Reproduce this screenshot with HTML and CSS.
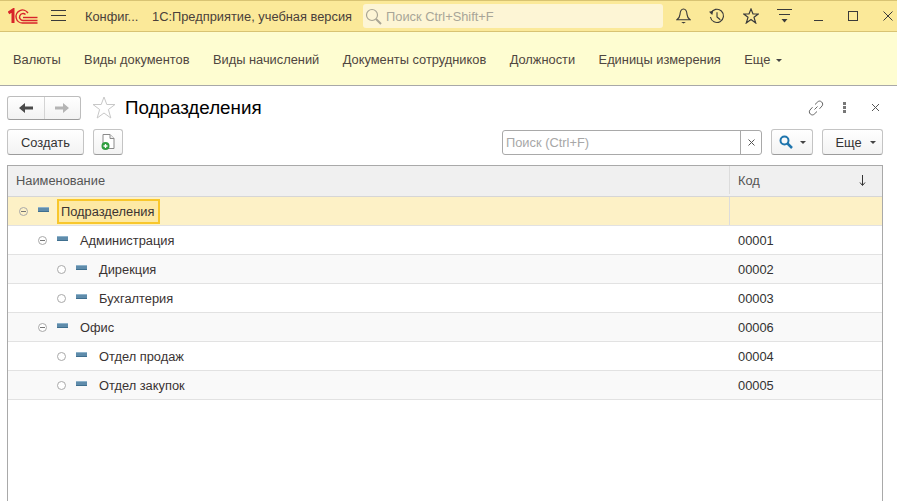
FILE: index.html
```html
<!DOCTYPE html>
<html lang="ru">

<head>
    <meta charset="UTF-8">
    <title>Подразделения</title>
    <link rel="stylesheet" href="styles.css">
</head>

<body>
    <header class="titlebar">
        <svg class="logo" width="30" height="16" viewBox="0 0 30 16" fill="none" stroke="#d8232a">
            <path d="M.5 5L5 2V15" stroke-width="3" />
            <path d="M20 5A6.500 6.500 0 1 0 15 15H29.500" stroke-width="1.400" />
            <path d="M17.500 6.500A3.500 3.500 0 1 0 15 12.500H29.500" stroke-width="1.400" />
            <path d="M15 9.500H29.500" stroke-width="1.400" />
        </svg>
        <svg class="burger" width="15" height="12" viewBox="0 0 15 12" stroke="#3a3a3a">
            <path d="M0 .5H15M0 5.500H15M0 10.500H15" />
        </svg>
        <span class="app-name">Конфиг...</span>
        <span class="app-title">1С:Предприятие, учебная версия</span>
        <div class="global-search">
            <svg width="17" height="17" viewBox="0 0 17 17" fill="none" stroke="#a9a594" stroke-width="1.200">
                <circle cx="7" cy="7" r="5.500" />
                <path d="M11 11L16 16" stroke-width="2" />
            </svg>
            <span>Поиск Ctrl+Shift+F</span>
        </div>
        <div class="tools">
            <svg width="15" height="18" viewBox="0 0 16 18" fill="none" stroke="#3a3a3a" stroke-width="1.200">
                <path d="M8 1.500C5 1.500 4.500 4 4.200 7.500C4 10 3 11.500 1 13H15C13 11.500 12 10 11.800 7.500C11.500 4 11 1.500 8 1.500Z" />
                <path d="M5.500 15.500H10.500L8 17Z" fill="#3a3a3a" stroke="none" />
            </svg>
            <svg width="16" height="17" viewBox="0 0 17 17" fill="none" stroke="#3a3a3a" stroke-width="1.200">
                <path d="M2 5A7 7 0 1 1 1.500 9" />
                <path d="M0 3.500L4.500 2.500L3.500 7Z" fill="#3a3a3a" stroke="none" />
                <path d="M8.500 4V9L12 12" />
            </svg>
            <svg width="16" height="16" viewBox="0 0 16 16" fill="none" stroke="#3a3a3a" stroke-width="1.200">
                <path d="M8 1L10 6H15.300L11 9.300L12.700 15L8 11.600L3.300 15L5 9.300L.7 6H6Z" />
            </svg>
            <svg width="15" height="14" viewBox="0 0 15 14" stroke="#3a3a3a">
                <path d="M0 .5H15M2 5.500H13" />
                <path d="M4.500 10H10.500L7.500 13.500Z" fill="#3a3a3a" stroke="none" />
            </svg>
        </div>
        <div class="window-btns">
            <svg width="9" height="9" viewBox="0 0 9 9" stroke="#3a3a3a"><path d="M0 8.500H9" /></svg>
            <svg width="10" height="10" viewBox="0 0 10 10" fill="none" stroke="#3a3a3a"><rect x=".5" y=".5" width="9" height="9" /></svg>
            <svg width="10" height="10" viewBox="0 0 10 10" stroke="#3a3a3a"><path d="M.5 .5L9.500 9.500M9.500 .5L.5 9.500" /></svg>
        </div>
    </header>

    <nav class="menu">
        <a>Валюты</a>
        <a>Виды документов</a>
        <a>Виды начислений</a>
        <a>Документы сотрудников</a>
        <a>Должности</a>
        <a>Единицы измерения</a>
        <a class="more">Еще <i class="caret"></i></a>
    </nav>

    <main class="page">
        <div class="title-row">
            <div class="nav-btns">
                <button class="nav-btn">
                    <svg width="14" height="10" viewBox="0 0 14 10" fill="#4a4a4a"><path d="M0 5L6 0V3.500H14V6.500H6V10Z" /></svg>
                </button>
                <button class="nav-btn">
                    <svg width="14" height="10" viewBox="0 0 14 10" fill="#b4b4b4"><path d="M14 5L8 0V3.500H0V6.500H8V10Z" /></svg>
                </button>
            </div>
            <svg class="fav" width="24" height="23" viewBox="0 0 24 23" fill="#fff" stroke="#c8c8c8">
                <path d="M12 1L14.800 8.500H23L16.400 13.500L18.800 22L12 17L5.200 22L7.600 13.500L1 8.500H9.200Z" />
            </svg>
            <h1>Подразделения</h1>
            <div class="title-tools">
                <svg width="16" height="16" viewBox="0 0 16 16" fill="none" stroke="#666">
                    <path d="M6.500 9.500L9.500 6.500" />
                    <path d="M7 4.500L9.800 1.800C10.800 .8 12.500 .8 13.700 2C14.900 3.200 15 5 14 6L11.500 8.800" />
                    <path d="M9 11.500L6.200 14.200C5.200 15.200 3.500 15.200 2.300 14C1.100 12.800 1 11 2 10L4.500 7.200" />
                </svg>
                <svg class="tool-dots" width="3" height="11" viewBox="0 0 3 11" fill="#777">
                    <rect width="3" height="3" /><rect y="4" width="3" height="3" /><rect y="8" width="3" height="3" />
                </svg>
                <svg class="tool-close" width="7" height="7" viewBox="0 0 7 7" stroke="#555"><path d="M0 0L7 7M7 0L0 7" /></svg>
            </div>
        </div>

        <div class="command-bar">
            <button class="btn btn-create">Создать</button>
            <button class="btn btn-copy">
                <svg width="15" height="18" viewBox="0 0 15 18">
                    <path d="M2 1.500H9L13 5.500V15.500H2Z" fill="#fff" stroke="#8a8a8a" />
                    <path d="M9 1.500V5.500H13" fill="#eee" stroke="#8a8a8a" />
                    <circle cx="4.500" cy="13" r="4" fill="#2f9e3f" />
                    <path d="M2.500 13H6.500M4.500 11V15" stroke="#fff" stroke-width="1.300" />
                </svg>
            </button>
            <div class="search">
                <span class="search-text">Поиск (Ctrl+F)</span>
                <span class="search-clear">
                    <svg width="7" height="7" viewBox="0 0 7 7" stroke="#555"><path d="M.5 .5L6.500 6.500M6.500 .5L.5 6.500" /></svg>
                </span>
            </div>
            <button class="btn btn-find">
                <svg width="14" height="14" viewBox="0 0 14 14" fill="none" stroke="#1f75ad" stroke-width="2">
                    <circle cx="5.500" cy="5.500" r="4" />
                    <path d="M8.500 8.500L13 13" stroke-width="2.500" />
                </svg>
                <i class="caret"></i>
            </button>
            <button class="btn btn-more">Еще <i class="caret"></i></button>
        </div>

        <div class="grid">
            <div class="row head">
                <div class="cell name">Наименование</div>
                <div class="cell code">Код
                    <svg width="7" height="11" viewBox="0 0 7 11" fill="none" stroke="#333"><path d="M3.500 0V10M1 7.500L3.500 10.500L6 7.500" /></svg>
                </div>
            </div>
            <div class="row selected">
                <div class="cell name level-0"><i class="toggle open"></i><i class="item"></i><span class="current">Подразделения</span></div>
                <div class="cell code"></div>
            </div>
            <div class="row">
                <div class="cell name level-1"><i class="toggle open"></i><i class="item"></i><span>Администрация</span></div>
                <div class="cell code">00001</div>
            </div>
            <div class="row alt">
                <div class="cell name level-2"><i class="toggle"></i><i class="item"></i><span>Дирекция</span></div>
                <div class="cell code">00002</div>
            </div>
            <div class="row">
                <div class="cell name level-2"><i class="toggle"></i><i class="item"></i><span>Бухгалтерия</span></div>
                <div class="cell code">00003</div>
            </div>
            <div class="row alt">
                <div class="cell name level-1"><i class="toggle open"></i><i class="item"></i><span>Офис</span></div>
                <div class="cell code">00006</div>
            </div>
            <div class="row">
                <div class="cell name level-2"><i class="toggle"></i><i class="item"></i><span>Отдел продаж</span></div>
                <div class="cell code">00004</div>
            </div>
            <div class="row alt">
                <div class="cell name level-2"><i class="toggle"></i><i class="item"></i><span>Отдел закупок</span></div>
                <div class="cell code">00005</div>
            </div>
        </div>
    </main>
</body>

</html>
```

FILE: styles.css
```css
/* Reset */

* {
    padding: 0;
    margin: 0;
    box-sizing: border-box;
}

html,
body {
    height: 100%;
    overflow: hidden;
}

body {
    display: flex;
    flex-direction: column;
    font-family: "Liberation Sans", Arial, sans-serif;
    font-size: 12.85px;
    color: #333;
    background-color: #fff;
}

i {
    display: block;
}

svg {
    display: block;
    flex: none;
}

.caret {
    display: inline-block;
    width: 0;
    height: 0;
    border-left: 3px solid transparent;
    border-right: 3px solid transparent;
    border-top: 3px solid #444;
    vertical-align: 2px;
}


/* Title bar */

.titlebar {
    flex: 0 0 32px;
    display: flex;
    align-items: center;
    background-color: #fbe999;
    border-top: 1px solid #d8c373;
    border-bottom: 1px solid #d8c373;
    color: #4a3f3a;
}

.logo {
    margin-left: 8px;
}

.burger {
    margin-left: 13px;
}

.app-name {
    width: 55px;
    margin-left: 19px;
}

.app-title {
    margin-left: 12px;
}

.global-search {
    width: 300px;
    height: 24px;
    margin-left: 11px;
    padding-left: 2px;
    display: flex;
    align-items: center;
    gap: 4px;
    background-color: #fdf5d5;
    border-radius: 3px;
    color: #a8a598;
}

.tools {
    display: flex;
    align-items: center;
    gap: 18px;
    margin-left: 13px;
}

.window-btns {
    display: flex;
    align-items: center;
    gap: 25px;
    margin-left: 22px;
}


/* Menu */

.menu {
    flex: 0 0 54px;
    display: flex;
    align-items: center;
    gap: 23.4px;
    padding: 1px 0 0 13px;
    background-color: #fefdd1;
    border-bottom: 1px solid #a8a8a8;
    color: #4f4640;
}

.menu a {
    white-space: nowrap;
}

.menu .caret {
    margin-left: 2px;
}


/* Form */

.page {
    flex: 1 1 auto;
    min-height: 0;
    display: flex;
    flex-direction: column;
    padding: 9px 14px 0 7px;
}

.title-row {
    flex: 0 0 25px;
    display: flex;
    align-items: center;
}

.nav-btns {
    display: flex;
    width: 74px;
    height: 24px;
    background: linear-gradient(#fff, #f2f2f2);
    border: 1px solid #bdbdbd;
    border-bottom-color: #9a9a9a;
    border-radius: 3px;
}

.nav-btn {
    flex: 1;
    display: flex;
    align-items: center;
    justify-content: center;
    background: none;
    border: 0;
}

.nav-btn + .nav-btn {
    border-left: 1px solid #d4d4d4;
}

.fav {
    margin-left: 11px;
}

h1 {
    margin-left: 9px;
    font-size: 18.8px;
    font-weight: normal;
    color: #000;
}

.title-tools {
    margin-left: auto;
    display: flex;
    align-items: center;
    padding-right: 4px;
}

.tool-dots {
    margin-left: 19px;
}

.tool-close {
    margin-left: 26px;
}

.command-bar {
    flex: 0 0 26px;
    display: flex;
    align-items: center;
    margin-top: 9px;
}

.btn {
    height: 26px;
    display: flex;
    align-items: center;
    justify-content: center;
    font: inherit;
    color: #333;
    background: linear-gradient(#fff, #f3f3f3);
    border: 1px solid #c4c4c4;
    border-bottom-color: #9c9c9c;
    border-radius: 3px;
}

.btn-create {
    width: 77px;
}

.btn-copy {
    width: 30px;
    margin-left: 9px;
}

.search {
    width: 260px;
    height: 25px;
    margin-left: auto;
    display: flex;
    background-color: #fff;
    border: 1px solid #a9a9a9;
    border-radius: 3px;
}

.search-text {
    flex: 1;
    padding-left: 3px;
    line-height: 23px;
    color: #a7a7a7;
}

.search-clear {
    width: 21px;
    display: flex;
    align-items: center;
    justify-content: center;
    border-left: 1px solid #a9a9a9;
}

.btn-find {
    width: 42px;
    margin-left: 9px;
    gap: 7px;
}

.btn-more {
    width: 61px;
    margin-left: 9px;
    padding-left: 6px;
    gap: 8px;
}


/* Tree table */

.grid {
    flex: 1 1 auto;
    margin-top: 10px;
    border: 1px solid #a9a9a9;
    border-bottom: 0;
}

.row {
    display: flex;
    height: 29px;
    border-bottom: 1px solid #e2e2e2;
}

.row.alt {
    background-color: #f9f9f9;
}

.row.head {
    height: 31px;
    padding-bottom: 2px;
    background-color: #f0f0f0;
    border-bottom: 1px solid #d6d6d6;
    color: #555;
}

.row.selected {
    background-color: #fdf1c6;
}

.cell {
    display: flex;
    align-items: center;
}

.cell.name {
    flex: 1;
}

.cell.code {
    flex: 0 0 153px;
    justify-content: space-between;
    padding: 0 16px 0 9px;
}

.row.head .cell.code,
.row.selected .cell.code {
    padding-left: 8px;
    border-left: 1px solid #dcdcdc;
}

.row.head .cell.name {
    padding-left: 8px;
}

.level-0 {
    padding-left: 11px;
}

.level-1 {
    padding-left: 30px;
}

.level-2 {
    padding-left: 49px;
}

.toggle {
    position: relative;
    width: 9px;
    height: 9px;
    border: 1px solid #a9a9a9;
    border-radius: 50%;
    background-color: #fff;
}

.toggle.open::after {
    content: "";
    position: absolute;
    left: 1px;
    right: 1px;
    top: 3px;
    height: 1px;
    background-color: #777;
}

.selected .toggle {
    background-color: transparent;
}

.item {
    width: 11px;
    height: 5px;
    margin: -4px 0 0 10px;
    background-color: #5f8cab;
    border-top: 1px solid #8fb3cb;
    border-bottom: 1px solid #3f6f8f;
}

.cell.name span {
    margin-left: 12px;
    color: #3a3333;
}

.cell.name .current {
    margin-left: 8px;
    height: 25px;
    padding: 0 4px 0 2px;
    line-height: 21px;
    background-color: #fde9a4;
    border: 2px solid #f8c72c;
    white-space: nowrap;
}
```
